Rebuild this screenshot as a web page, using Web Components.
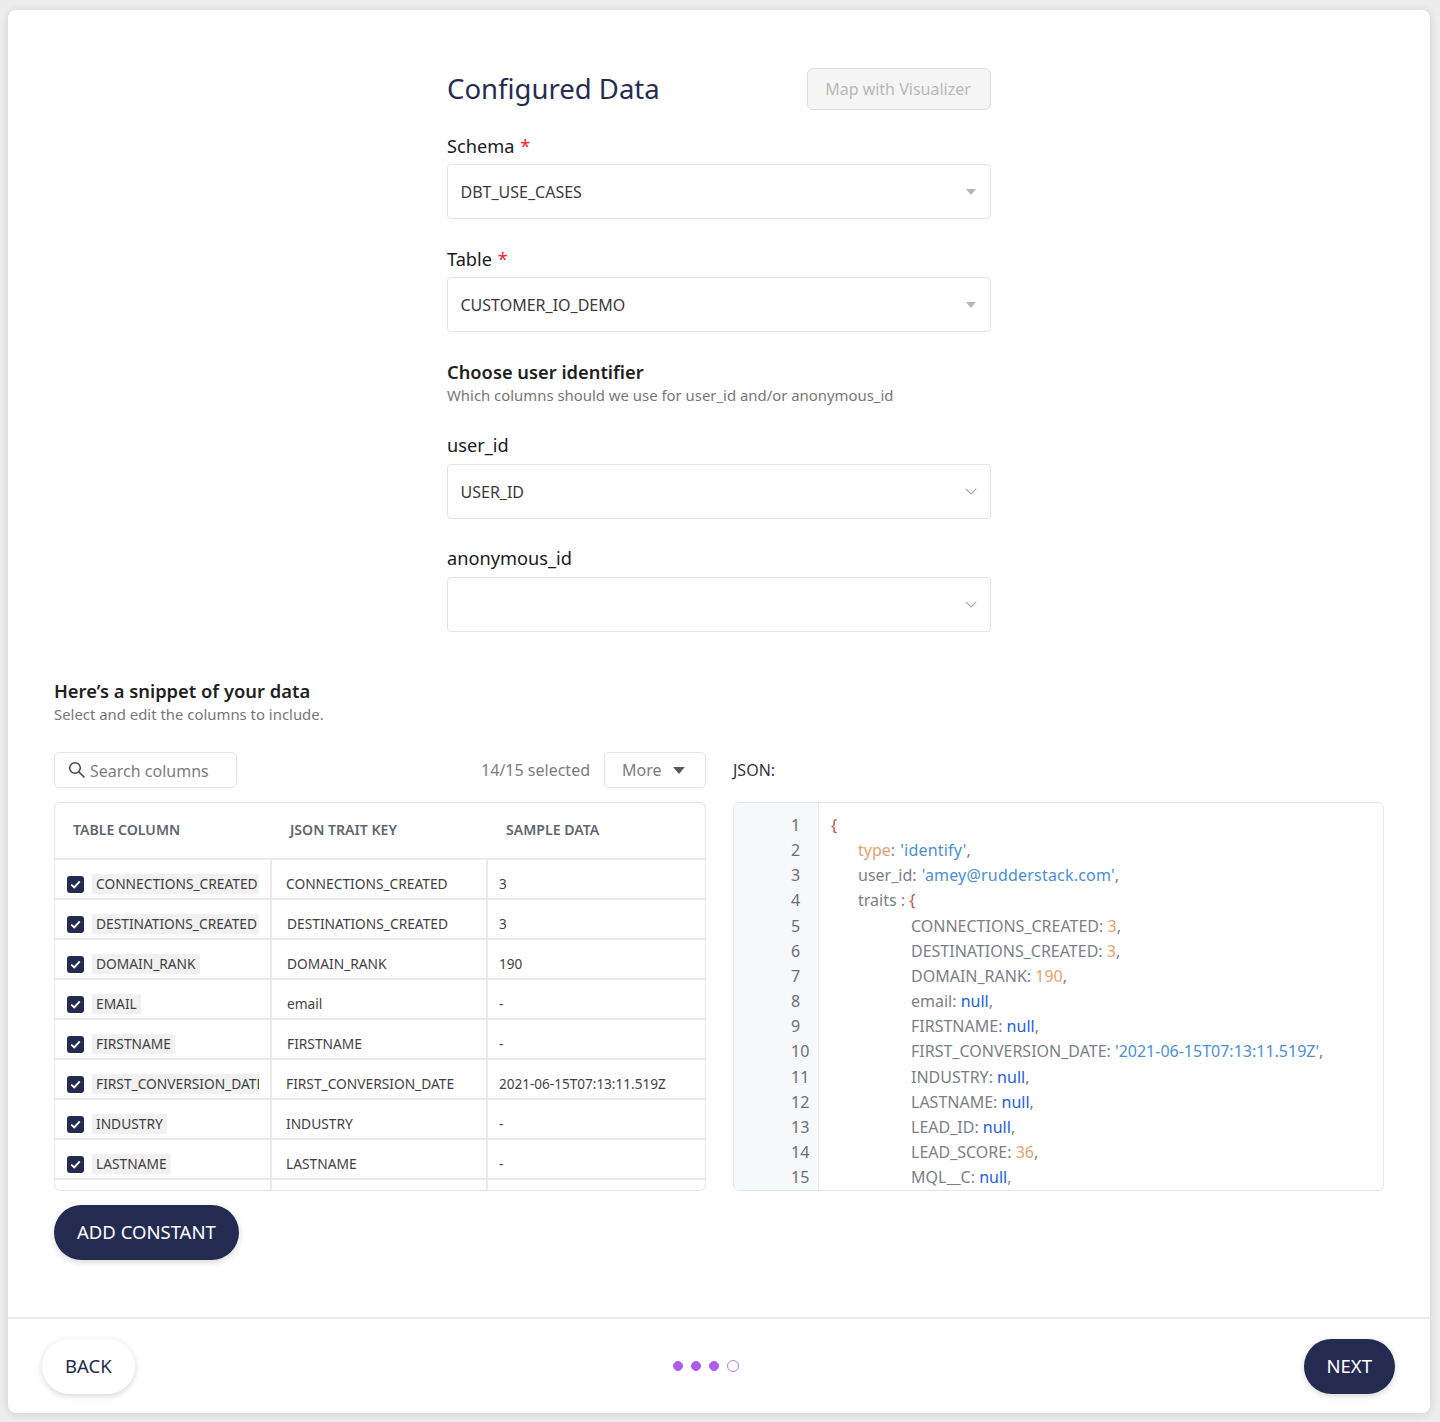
<!DOCTYPE html>
<html>
<head>
<meta charset="utf-8">
<title>Configured Data</title>
<style>
  html, body { margin: 0; padding: 0; }
  body {
    width: 1440px;
    height: 1422px;
    box-sizing: border-box;
    padding: 10px 10px 9px 8px;
    background: #ececec;
    font-family: "Noto Sans", sans-serif;
    color: #333;
    overflow: hidden;
  }
</style>
</head>
<body>
<setup-card>
  <config-form></config-form>
  <data-snippet></data-snippet>
  <setup-footer slot="footer"></setup-footer>
</setup-card>

<script>
const CARET = `<svg width="10" height="6" viewBox="0 0 10 6"><path d="M0 0h10L5 6z" fill="currentColor"/></svg>`;
const CHEVRON = `<svg width="12" height="7" viewBox="0 0 12 7"><path d="M.8.8 6 6 11.2.8" fill="none" stroke="currentColor" stroke-width="1.2"/></svg>`;

class SetupCard extends HTMLElement {
  connectedCallback() {
    if (this.shadowRoot) return;
    const shadow = this.attachShadow({ mode: "open" });
    shadow.innerHTML = `
      <style>
        :host {
          display: flex;
          flex-direction: column;
          height: 100%;
          background: #fff;
          border-radius: 8px;
          box-shadow: 0 1px 8px rgba(0, 0, 0, 0.12);
        }
        .body { flex: 1; padding: 58px 46px 0; }
      </style>
      <div class="body"><slot></slot></div>
      <slot name="footer"></slot>
    `;
  }
}

class SelectField extends HTMLElement {
  connectedCallback() {
    if (this.shadowRoot) return;
    const shadow = this.attachShadow({ mode: "open" });
    const required = this.hasAttribute("required");
    const chevron = this.getAttribute("arrow") === "chevron";
    shadow.innerHTML = `
      <style>
        :host { display: block; }
        label {
          display: block;
          height: 24px;
          font-size: 18.2px;
          line-height: 24px;
          color: #1a1a1a;
          margin-bottom: 6px;
        }
        label.up { margin: -1px 0 7px; }
        .req { color: #f5222d; margin-left: 1px; }
        .box {
          box-sizing: border-box;
          height: 55px;
          display: flex;
          align-items: center;
          justify-content: space-between;
          padding: 0 14px 0 12.5px;
          border: 1.5px solid #e4e4e4;
          border-radius: 4px;
          font-size: 16px;
          color: #3a3a3a;
          background: #fff;
        }
        .arrow { display: flex; color: #b5b5b5; }
        .arrow.chev { color: #a8a8a8; margin-right: -1px; }
      </style>
      <label class="${chevron ? "up" : ""}">${this.getAttribute("label")}${required ? ' <span class="req">*</span>' : ""}</label>
      <div class="box">
        <span>${this.getAttribute("value") || ""}</span>
        <span class="arrow${chevron ? " chev" : ""}">${chevron ? CHEVRON : CARET}</span>
      </div>
    `;
  }
}

class ConfigForm extends HTMLElement {
  connectedCallback() {
    if (this.shadowRoot) return;
    const shadow = this.attachShadow({ mode: "open" });
    shadow.innerHTML = `
      <style>
        :host { display: block; width: 544px; margin: 0 auto; }
        .head {
          display: flex;
          align-items: center;
          justify-content: space-between;
          height: 42px;
          margin-bottom: 24px;
        }
        h1 { margin: 0; font-size: 27.5px; font-weight: 400; color: #252c52; line-height: 40px; }
        .map {
          box-sizing: border-box;
          width: 184px;
          height: 42px;
          display: flex;
          align-items: center;
          justify-content: center;
          padding-right: 2px;
          background: #f5f5f5;
          border: 1.5px solid #dedede;
          border-radius: 6px;
          font-size: 16px;
          color: #b8b8b8;
        }
        select-field { margin-bottom: 28px; }
        select-field:last-child { margin-bottom: 0; }
        h2 { margin: 0; font-size: 18.3px; font-weight: 600; line-height: 24px; color: #1f1f1f; }
        p { margin: 0 0 28px; font-size: 14.9px; line-height: 22px; color: #777; }
      </style>
      <div class="head">
        <h1>Configured Data</h1>
        <div class="map">Map with Visualizer</div>
      </div>
      <select-field label="Schema" value="DBT_USE_CASES" required></select-field>
      <select-field label="Table" value="CUSTOMER_IO_DEMO" required></select-field>
      <h2>Choose user identifier</h2>
      <p>Which columns should we use for user_id and/or anonymous_id</p>
      <select-field label="user_id" value="USER_ID" arrow="chevron"></select-field>
      <select-field label="anonymous_id" arrow="chevron"></select-field>
    `;
  }
}

class ColumnTable extends HTMLElement {
  connectedCallback() {
    if (this.shadowRoot) return;
    const shadow = this.attachShadow({ mode: "open" });
    const rows = [
      ["CONNECTIONS_CREATED", "3", 0],
      ["DESTINATIONS_CREATED", "3", 1],
      ["DOMAIN_RANK", "190", 1],
      ["EMAIL", "-", 1, "email"],
      ["FIRSTNAME", "-", 1],
      ["FIRST_CONVERSION_DATE", "2021-06-15T07:13:11.519Z", 0],
      ["INDUSTRY", "-", 0],
      ["LASTNAME", "-", 0],
    ];
    const tick = `<svg width="11" height="9" viewBox="0 0 11 9"><path d="M1.2 4.6 4.2 7.4 9.8 1.3" fill="none" stroke="#fff" stroke-width="1.9"/></svg>`;
    const body = rows.map(([name, sample, shift, key]) => `
      <div class="row">
        <div class="cell first">
          <span class="check">${tick}</span>
          <span class="tag">${name}</span>
        </div>
        <div class="cell key${shift ? " shift" : ""}">${key || name}</div>
        <div class="cell sample">${sample}</div>
      </div>`).join("");
    shadow.innerHTML = `
      <style>
        :host {
          display: block;
          box-sizing: border-box;
          height: 389px;
          border: 1.5px solid #e6e6e6;
          border-radius: 6px;
          overflow: hidden;
          font-size: 13.75px;
          color: #3f3f3f;
        }
        .row, .top {
          display: grid;
          grid-template-columns: 217px 216px 1fr;
        }
        .top {
          height: 57px;
          box-sizing: border-box;
          padding-bottom: 2px;
          align-items: center;
          border-bottom: 2px solid #ebebeb;
          font-size: 14.1px;
          font-weight: 600;
          color: #5f6670;
        }
        .top span { padding-left: 18px; }
        .row { height: 40px; box-sizing: border-box; border-bottom: 2px solid #ebebeb; }
        .cell {
          display: flex;
          align-items: center;
          padding-top: 8px;
          white-space: nowrap;
          overflow: hidden;
          box-sizing: border-box;
        }
        .first { padding-left: 12px; padding-top: 10px; border-right: 2px solid #ebebeb; }
        .key { padding-left: 14px; border-right: 2px solid #ebebeb; }
        .key.shift { padding-left: 15px; }
        .sample { padding-left: 11px; padding-top: 10px; font-size: 13.55px; }
        .check {
          flex: none;
          width: 17px;
          height: 17px;
          border-radius: 3px;
          background: #232b51;
          display: flex;
          align-items: center;
          justify-content: center;
          margin-right: 8px;
        }
        .tag {
          box-sizing: border-box;
          background: #f1f1f1;
          padding: 0 4px;
          height: 20px;
          line-height: 20px;
          max-width: 167px;
          overflow: hidden;
        }
        .tail { display: grid; grid-template-columns: 217px 216px; height: 10px; }
        .tail div { border-right: 2px solid #ebebeb; }
      </style>
      <div class="top"><span>TABLE COLUMN</span><span>JSON TRAIT KEY</span><span>SAMPLE DATA</span></div>
      ${body}
      <div class="tail"><div></div><div></div></div>
    `;
  }
}

class JsonView extends HTMLElement {
  connectedCallback() {
    if (this.shadowRoot) return;
    const shadow = this.attachShadow({ mode: "open" });
    const n = (s) => `<span class="null">${s}</span>`;
    const num = (s) => `<span class="num">${s}</span>`;
    const str = (s) => `<span class="str">${s}</span>`;
    const wide = (s) => `<span class="str wide">${s}</span>`;
    const lines = [
      [0, `<span class="brace">{</span>`],
      [1, `<span class="num">type</span>: ${wide("'identify'")},`],
      [1, `user_id: ${wide("'amey@rudderstack.com'")},`],
      [1, `traits : <span class="brace">{</span>`],
      [2, `CONNECTIONS_CREATED: ${num(3)},`],
      [2, `DESTINATIONS_CREATED: ${num(3)},`],
      [2, `DOMAIN_RANK: ${num(190)},`],
      [2, `email: ${n("null")},`],
      [2, `FIRSTNAME: ${n("null")},`],
      [2, `FIRST_CONVERSION_DATE: ${str("'2021-06-15T07:13:11.519Z'")},`],
      [2, `INDUSTRY: ${n("null")},`],
      [2, `LASTNAME: ${n("null")},`],
      [2, `LEAD_ID: ${n("null")},`],
      [2, `LEAD_SCORE: ${num(36)},`],
      [2, `MQL__C: ${n("null")},`],
    ];
    shadow.innerHTML = `
      <style>
        :host {
          display: flex;
          box-sizing: border-box;
          height: 389px;
          border: 1.5px solid #e6e6e6;
          border-radius: 6px;
          overflow: hidden;
          font-size: 16px;
          line-height: 25.15px;
          color: #7b8087;
        }
        .nums {
          flex: none;
          width: 85px;
          box-sizing: border-box;
          padding: 10px 0 0 57px;
          background: #f7f8f9;
          border-right: 1.5px solid #e8e8e8;
          color: #6b6f75;
        }
        .code { padding: 10px 0 0 12px; white-space: nowrap; }
        .l1 { padding-left: 27px; }
        .l2 { padding-left: 80px; }
        .brace { color: #c0504d; }
        .num { color: #e6a26c; }
        .str { color: #4a90d9; }
        .str.wide { letter-spacing: 0.2px; margin-left: 1px; }
        .null { color: #1a5fe0; }
      </style>
      <div class="nums">${lines.map((_, i) => `<div>${i + 1}</div>`).join("")}</div>
      <div class="code">${lines.map(([lvl, html]) => `<div class="l${lvl}">${html}</div>`).join("")}</div>
    `;
  }
}

class PillButton extends HTMLElement {
  connectedCallback() {
    if (this.shadowRoot) return;
    const shadow = this.attachShadow({ mode: "open" });
    shadow.innerHTML = `
      <style>
        :host {
          display: inline-flex;
          align-items: center;
          justify-content: center;
          box-sizing: border-box;
          height: 55px;
          padding: 0 23px 2px;
          border-radius: 28px;
          font-size: 18.5px;
          background: #232b51;
          color: #fff;
          box-shadow: 0 2px 6px rgba(0, 0, 0, 0.16);
        }
        :host([light]) { background: #fff; color: #232b51; }
      </style>
      <slot></slot>
    `;
  }
}

class DataSnippet extends HTMLElement {
  connectedCallback() {
    if (this.shadowRoot) return;
    const shadow = this.attachShadow({ mode: "open" });
    shadow.innerHTML = `
      <style>
        :host { display: block; margin-top: 47px; }
        h2 { margin: 0; font-size: 18.35px; font-weight: 600; line-height: 24px; color: #1f1f1f; }
        p { margin: 0; font-size: 14.9px; line-height: 22px; color: #777; }
        .grid {
          display: grid;
          grid-template-columns: 652px 651px;
          column-gap: 27px;
          margin-top: 27px;
        }
        .bar { height: 36px; margin-bottom: 14px; display: flex; align-items: center; }
        .search, .more {
          box-sizing: border-box;
          height: 36px;
          display: flex;
          align-items: center;
          border: 1.5px solid #e4e4e4;
          border-radius: 5px;
          font-size: 16px;
          color: #7d7d7d;
        }
        .search { width: 183px; padding-left: 13px; gap: 4px; }
        .search svg { flex: none; color: #444; }
        .search span { padding-top: 2px; }
        .count { margin-left: auto; margin-right: 14px; font-size: 16px; color: #7d7d7d; }
        .more { width: 102px; padding-left: 17px; gap: 11px; }
        .more svg { color: #5a5a5a; width: 12px; height: 7px; }
        .json-label { font-size: 16px; color: #333; }
        pill-button { margin-top: 14px; }
      </style>
      <h2>Here’s a snippet of your data</h2>
      <p>Select and edit the columns to include.</p>
      <div class="grid">
        <div>
          <div class="bar">
            <div class="search">
              <svg width="18" height="18" viewBox="0 0 18 18"><circle cx="7" cy="7" r="5.3" fill="none" stroke="currentColor" stroke-width="1.5"/><path d="M11 11l5.5 5.5" stroke="currentColor" stroke-width="1.6"/></svg>
              <span>Search columns</span>
            </div>
            <span class="count">14/15 selected</span>
            <div class="more">More ${CARET}</div>
          </div>
          <column-table></column-table>
          <pill-button>ADD CONSTANT</pill-button>
        </div>
        <div>
          <div class="bar"><span class="json-label">JSON:</span></div>
          <json-view></json-view>
        </div>
      </div>
    `;
  }
}

class StepDots extends HTMLElement {
  connectedCallback() {
    if (this.shadowRoot) return;
    const shadow = this.attachShadow({ mode: "open" });
    const done = Number(this.getAttribute("done"));
    const total = Number(this.getAttribute("total"));
    let dots = "";
    for (let i = 0; i < total; i++) {
      dots += `<span class="dot${i < done ? " on" : ""}"></span>`;
    }
    shadow.innerHTML = `
      <style>
        :host { display: flex; gap: 8.3px; align-items: center; }
        .dot {
          box-sizing: border-box;
          width: 12px;
          height: 12px;
          margin-left: -1px;
          border-radius: 50%;
          border: 1.5px solid #b77af2;
        }
        .on { width: 10px; height: 10px; margin-left: 0; background: #ad5cf0; border-color: #ad5cf0; }
      </style>
      ${dots}
    `;
  }
}

class SetupFooter extends HTMLElement {
  connectedCallback() {
    if (this.shadowRoot) return;
    const shadow = this.attachShadow({ mode: "open" });
    shadow.innerHTML = `
      <style>
        :host {
          display: flex;
          align-items: center;
          justify-content: space-between;
          box-sizing: border-box;
          height: 96px;
          padding: 0 35px 0 34px;
          border-top: 2px solid #ebebeb;
        }
        step-dots { margin-left: -27px; }
      </style>
      <pill-button light>BACK</pill-button>
      <step-dots done="3" total="4"></step-dots>
      <pill-button>NEXT</pill-button>
    `;
  }
}

customElements.define("setup-card", SetupCard);
customElements.define("select-field", SelectField);
customElements.define("config-form", ConfigForm);
customElements.define("column-table", ColumnTable);
customElements.define("json-view", JsonView);
customElements.define("pill-button", PillButton);
customElements.define("data-snippet", DataSnippet);
customElements.define("step-dots", StepDots);
customElements.define("setup-footer", SetupFooter);
</script>
</body>
</html>
